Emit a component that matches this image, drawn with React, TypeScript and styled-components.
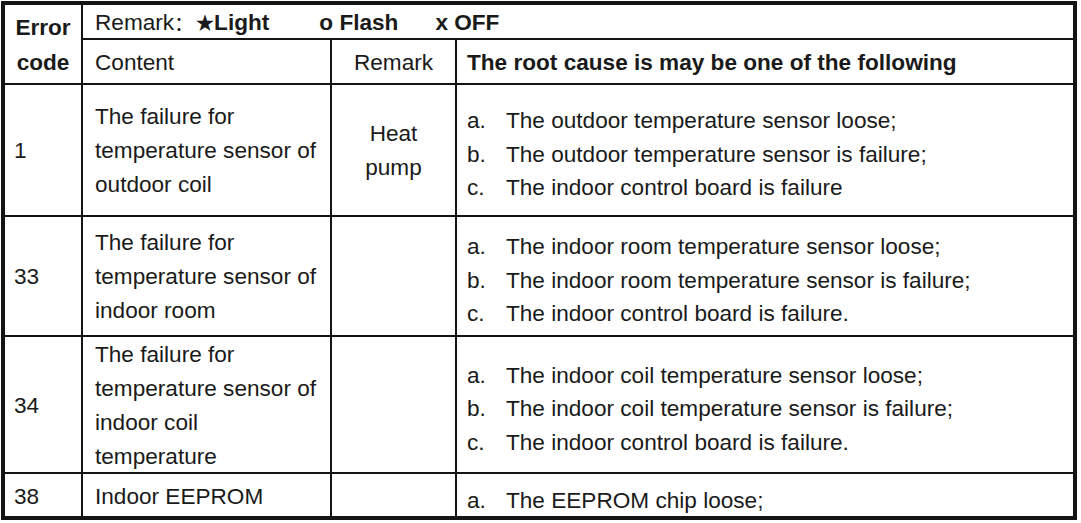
import React from "react";
import styled, { createGlobalStyle } from "styled-components";

const Global = createGlobalStyle`
  html, body { margin: 0; padding: 0; background: #ffffff; }
  body { font-family: "Liberation Sans", Arial, sans-serif; color: #1a1a1a; }
`;

const Table = styled.div`
  margin: 1px 0 0 1px;
  width: 1076px;
  box-sizing: border-box;
  display: grid;
  grid-template-columns: 76px 247px 123px 1fr;
  grid-template-rows: 33px 43px 130px 118px 135px 42px;
  gap: 2px;
  background: #141414;
  border: 4px solid #141414;
  font-size: 22.6px;
`;

const Cell = styled.div<{ $center?: boolean; $pad?: number; $top?: number; $bold?: boolean }>`
  background: #ffffff;
  display: flex;
  flex-direction: column;
  justify-content: center;
  align-items: ${(p) => (p.$center ? "center" : "flex-start")};
  text-align: ${(p) => (p.$center ? "center" : "left")};
  padding: ${(p) => p.$top ?? 0}px 8px 0 ${(p) => p.$pad ?? 12}px;
  box-sizing: border-box;
  line-height: 34px;
  font-weight: ${(p) => (p.$bold ? 700 : 400)};
  min-width: 0;
  min-height: 0;
  white-space: nowrap;
`;

const CodeHead = styled(Cell)`
  grid-row: 1 / 3;
  line-height: 35px;
  padding: 2px 0 0 0;
`;

const RemarkBar = styled(Cell)`
  grid-column: 2 / 5;
  flex-direction: row;
  align-items: center;
  justify-content: flex-start;
  padding: 3px 0 0 12px;
`;

const Colon = styled.span`
  font-family: "Noto Sans CJK SC", "Liberation Sans", sans-serif;
  font-size: 20px;
  font-weight: 400;
  line-height: 34px;
`;

const Star = styled.span`
  font-size: 20px;
`;

const Bold = styled.span<{ $gap?: number }>`
  font-weight: 700;
  margin-left: ${(p) => p.$gap ?? 0}px;
`;

const TopCell = styled(Cell)`
  justify-content: flex-start;
`;

const Line = styled.span`
  display: block;
`;

const List = styled.ol`
  list-style: none;
  margin: 0;
  padding: 0;
`;

const Item = styled.li`
  display: flex;
  line-height: 33.5px;
`;

const Marker = styled.span`
  width: 39px;
  flex: none;
`;

type Row = {
  code: string;
  content: string[];
  remark: string[];
  causes: string[];
};

const rows: Row[] = [
  {
    code: "1",
    content: ["The failure for", "temperature sensor of", "outdoor coil"],
    remark: ["Heat", "pump"],
    causes: [
      "The outdoor temperature sensor loose;",
      "The outdoor temperature sensor is failure;",
      "The indoor control board is failure",
    ],
  },
  {
    code: "33",
    content: ["The failure for", "temperature sensor of", "indoor room"],
    remark: [],
    causes: [
      "The indoor room temperature sensor loose;",
      "The indoor room temperature sensor is failure;",
      "The indoor control board is failure.",
    ],
  },
  {
    code: "34",
    content: ["The failure for", "temperature sensor of", "indoor coil", "temperature"],
    remark: [],
    causes: [
      "The indoor coil temperature sensor loose;",
      "The indoor coil temperature sensor is failure;",
      "The indoor control board is failure.",
    ],
  },
  {
    code: "38",
    content: ["Indoor EEPROM"],
    remark: [],
    causes: ["The EEPROM chip loose;"],
  },
];

const letters = ["a.", "b.", "c.", "d."];

export default function App() {
  return (
    <>
      <Global />
      <Table>
        <CodeHead $center $bold>
          <Line>Error</Line>
          <Line>code</Line>
        </CodeHead>
        <RemarkBar>
          <span>Remark</span>
          <Colon>：</Colon>
          <Bold $gap={2}>
            <Star>★</Star>Light
          </Bold>
          <Bold $gap={50}>o Flash</Bold>
          <Bold $gap={37}>x OFF</Bold>
        </RemarkBar>
        <Cell $top={3}>Content</Cell>
        <Cell $center $pad={8} $top={3}>Remark</Cell>
        <Cell $bold $pad={10} $top={3}>The root cause is may be one of the following</Cell>
        {rows.map((r, i) => {
          const last = i === rows.length - 1;
          const C = last ? TopCell : Cell;
          return (
            <React.Fragment key={r.code}>
              <C $pad={9} $top={last ? 6 : 2}>{r.code}</C>
              <C $top={last ? 6 : 2}>
                {r.content.map((t) => (
                  <Line key={t}>{t}</Line>
                ))}
              </C>
              <C $center $pad={8} $top={last ? 6 : 2}>
                {r.remark.map((t) => (
                  <Line key={t}>{t}</Line>
                ))}
              </C>
              <C $pad={10} $top={last ? 10 : 9}>
                <List>
                  {r.causes.map((t, k) => (
                    <Item key={t}>
                      <Marker>{letters[k]}</Marker>
                      <span>{t}</span>
                    </Item>
                  ))}
                </List>
              </C>
            </React.Fragment>
          );
        })}
      </Table>
    </>
  );
}
